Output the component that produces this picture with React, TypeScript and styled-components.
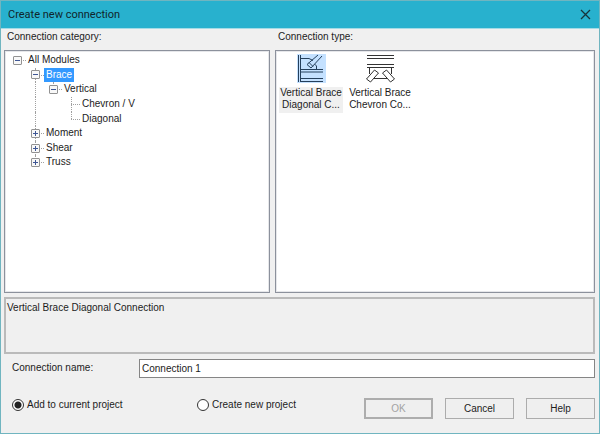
import React, { useState } from "react";
import styled, { createGlobalStyle, css } from "styled-components";

const GlobalStyle = createGlobalStyle`
  *, *::before, *::after { box-sizing: border-box; }
  body { margin: 0; }
  button, input { font: inherit; color: inherit; }
`;

const Dialog = styled.form`
  display: flex;
  flex-direction: column;
  min-height: 100vh;
  border: 1px solid #70b5c0;
  background: #f0f0f0;
  color: #1c1c1c;
  font: 10px/12px "Liberation Sans", Arial, sans-serif;
`;

const TitleBar = styled.header`
  display: flex;
  align-items: center;
  justify-content: space-between;
  height: 28px;
  padding: 0 8px 0 7px;
  border-bottom: 1px solid #a4dbe6;
  background: #28b1ce;
`;

const Title = styled.h1`
  margin: 0;
  color: #10252b;
  font: 11px/16px Roboto, sans-serif;
`;

const CloseButton = styled.button`
  display: flex;
  padding: 0;
  border: 0;
  background: none;
`;

const Body = styled.main`
  display: flex;
  flex: 1;
  flex-direction: column;
  padding: 0 4px 0 3px;
`;

const Columns = styled.div`
  display: grid;
  flex: 1;
  grid-template-columns: 266fr 320fr;
  gap: 5px;
`;

const Column = styled.section`
  display: flex;
  flex-direction: column;
`;

const Heading = styled.h2`
  margin: 0;
  padding: 2px 0 7px 3px;
  font: inherit;
`;

const Panel = styled.div`
  flex: 1;
  border: 1px solid #8c919c;
  box-shadow: inset 0 0 0 1px #e6e7ea;
  background: #fff;
`;

const Tree = styled.div`
  display: grid;
  grid-auto-rows: 1fr;
  height: 117px;
  margin: 2px 0 0 3px;
`;

const TreeRow = styled.div`
  display: flex;
  min-height: 0;
`;

type GuideKind = "blank" | "line" | "root" | "tee" | "end";

const Guide = styled.span<{ $kind: GuideKind }>`
  position: relative;
  display: flex;
  align-items: center;
  justify-content: center;
  width: 18px;

  ${({ $kind }) =>
    ($kind === "line" || $kind === "tee" || $kind === "end") &&
    css`
      &::before {
        content: "";
        position: absolute;
        top: 0;
        bottom: ${$kind === "end" ? "50%" : "0"};
        left: 9px;
        border-left: 1px dotted #a0a0a0;
      }
    `}

  ${({ $kind }) =>
    $kind !== "line" &&
    $kind !== "blank" &&
    css`
      &::after {
        content: "";
        position: absolute;
        top: 7px;
        right: 0;
        left: 9px;
        border-top: 1px dotted #a0a0a0;
      }
    `}
`;

const Expander = styled.button`
  position: relative;
  z-index: 1;
  display: flex;
  align-items: center;
  justify-content: center;
  width: 9px;
  height: 9px;
  margin-left: 1px;
  padding: 0;
  border: 1px solid #929292;
  border-radius: 1px;
  background: #f8f8f8;
`;

const NodeLabel = styled.span<{ $selected: boolean }>`
  padding: 0 2px;
  line-height: 14px;
  ${({ $selected }) => $selected && "background: #3399ff; color: #fff;"}
`;

const TypeList = styled.div`
  display: flex;
  gap: 5px;
  padding: 3px;
`;

const TypeItem = styled.button`
  display: flex;
  flex-direction: column;
  align-items: center;
  gap: 4px;
  width: 64px;
  padding: 0;
  border: 0;
  background: none;
`;

const TypeIcon = styled.svg<{ $selected: boolean }>`
  display: block;
  width: 29px;
  height: 29px;
  fill: none;
  stroke: ${({ $selected }) => ($selected ? "#25405c" : "#333")};
  background: ${({ $selected }) => ($selected ? "#c4e1ff" : "transparent")};
`;

const TypeLabel = styled.span<{ $selected: boolean }>`
  display: flex;
  flex-direction: column;
  align-items: center;
  width: 100%;
  padding-bottom: 2px;
  white-space: nowrap;
  background: ${({ $selected }) => ($selected ? "#f0f0f0" : "transparent")};
`;

const Description = styled.p`
  height: 57px;
  margin: 4px 0 5px;
  padding: 3px 1px;
  border: 2px solid #bababa;
`;

const NameRow = styled.div`
  display: flex;
  align-items: center;
`;

const NameLabel = styled.label`
  width: 135px;
  padding: 0 0 2px 8px;
`;

const NameInput = styled.input`
  flex: 1;
  min-width: 0;
  height: 19px;
  padding: 0 2px;
  border: 1px solid #858585;
  background: #fff;
`;

const Footer = styled.footer`
  display: flex;
  align-items: flex-start;
  justify-content: space-between;
  padding: 20px 0 14px 8px;
`;

const Choices = styled.div`
  display: grid;
  grid-template-columns: 185px auto;
`;

const Choice = styled.label`
  display: flex;
  align-items: center;
  gap: 3px;
  height: 13px;
`;

const Radio = styled.input`
  width: 12px;
  height: 12px;
  margin: 0;
  appearance: none;
  border: 1px solid #333;
  border-radius: 50%;
  background: #fff;
  &:checked {
    background: radial-gradient(circle, #222 0 3px, #fff 4px);
  }
`;

const Actions = styled.div`
  display: flex;
  gap: 12px;
`;

const ActionButton = styled.button`
  width: 69px;
  height: 21px;
  padding: 0;
  border: 1px solid #acacac;
  background: #efefef;
  &:disabled {
    border: 2px solid #adadad;
    color: #a3a3a3;
  }
`;

interface TreeNode {
  label: string;
  guides: GuideKind[];
  open?: boolean;
}

const nodes: TreeNode[] = [
  { label: "All Modules", guides: ["root"], open: true },
  { label: "Brace", guides: ["blank", "tee"], open: true },
  { label: "Vertical", guides: ["blank", "line", "end"], open: true },
  { label: "Chevron / V", guides: ["blank", "line", "blank", "tee"] },
  { label: "Diagonal", guides: ["blank", "line", "blank", "end"] },
  { label: "Moment", guides: ["blank", "tee"], open: false },
  { label: "Shear", guides: ["blank", "tee"], open: false },
  { label: "Truss", guides: ["blank", "end"], open: false },
];

const connectionTypes = [
  {
    lines: ["Vertical Brace", "Diagonal C..."],
    drawing: (
      <>
        <path d="M1.5 1v27M3.5 1v27M4 15.5h22M4 18h22M4 24.5h22M4 27.5h22" />
        <path d="M4 4.5h8l4 2M19.5 15v-3l-2-2" />
        <path d="M21 1L10 10.5l4 3.5L25 2M12 8.5l4 4" />
      </>
    ),
  },
  {
    lines: ["Vertical Brace", "Chevron Co..."],
    drawing: (
      <>
        <path d="M1 1.5h27M1 4.5h27M1 10.5h27M1 13.5h27" />
        <path d="M3.5 14v6M25.5 14v6M6 24.5h17" />
        <path d="M8.5 16l4 3-8 9-4-3zM20.5 16l-4 3 8 9 4-3z" fill="#fff" />
      </>
    ),
  },
];

export default function App() {
  const [name, setName] = useState("Connection 1");
  const [target, setTarget] = useState("current");

  return (
    <Dialog onSubmit={(event) => event.preventDefault()}>
      <GlobalStyle />
      <TitleBar>
        <Title>Create new connection</Title>
        <CloseButton type="button" aria-label="Close">
          <svg width="11" height="11" fill="none" stroke="#17343b" strokeWidth="1.3">
            <path d="M1 1l9 9M10 1l-9 9" />
          </svg>
        </CloseButton>
      </TitleBar>
      <Body>
        <Columns>
          <Column>
            <Heading>Connection category:</Heading>
            <Panel>
              <Tree role="tree" aria-label="Connection category">
                {nodes.map(({ label, guides, open }) => (
                  <TreeRow
                    key={label}
                    role="treeitem"
                    aria-level={guides.length}
                    aria-expanded={open}
                    aria-selected={label === "Brace"}
                  >
                    {guides.map((kind, index) => (
                      <Guide key={index} $kind={kind}>
                        {open !== undefined && index === guides.length - 1 && (
                          <Expander type="button" aria-label={`Toggle ${label}`}>
                            <svg width="5" height="5" stroke="#3f5795">
                              <path d={open ? "M0 2.5h5" : "M0 2.5h5M2.5 0v5"} />
                            </svg>
                          </Expander>
                        )}
                      </Guide>
                    ))}
                    <NodeLabel $selected={label === "Brace"}>{label}</NodeLabel>
                  </TreeRow>
                ))}
              </Tree>
            </Panel>
          </Column>
          <Column>
            <Heading>Connection type:</Heading>
            <Panel>
              <TypeList>
                {connectionTypes.map(({ lines, drawing }, index) => (
                  <TypeItem key={lines[1]} type="button" aria-pressed={index === 0}>
                    <TypeIcon $selected={index === 0} viewBox="0 0 29 29" aria-hidden>
                      {drawing}
                    </TypeIcon>
                    <TypeLabel $selected={index === 0}>
                      {lines.map((line) => (
                        <span key={line}>{line}</span>
                      ))}
                    </TypeLabel>
                  </TypeItem>
                ))}
              </TypeList>
            </Panel>
          </Column>
        </Columns>
        <Description>Vertical Brace Diagonal Connection</Description>
        <NameRow>
          <NameLabel htmlFor="connection-name">Connection name:</NameLabel>
          <NameInput
            id="connection-name"
            value={name}
            onChange={(event) => setName(event.target.value)}
          />
        </NameRow>
        <Footer>
          <Choices role="radiogroup" aria-label="Project">
            <Choice>
              <Radio
                type="radio"
                name="project"
                checked={target === "current"}
                onChange={() => setTarget("current")}
              />
              Add to current project
            </Choice>
            <Choice>
              <Radio
                type="radio"
                name="project"
                checked={target === "new"}
                onChange={() => setTarget("new")}
              />
              Create new project
            </Choice>
          </Choices>
          <Actions>
            <ActionButton disabled>OK</ActionButton>
            <ActionButton type="button">Cancel</ActionButton>
            <ActionButton type="button">Help</ActionButton>
          </Actions>
        </Footer>
      </Body>
    </Dialog>
  );
}
